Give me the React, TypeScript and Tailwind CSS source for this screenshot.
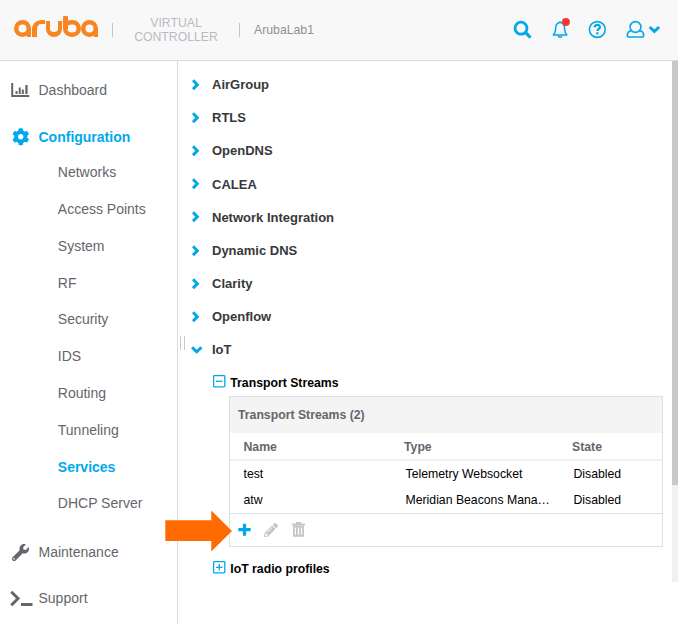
import type { ReactNode } from "react";
import { FaCog, FaPencilAlt, FaWrench } from "react-icons/fa";

const subItems = ["Networks", "Access Points", "System", "RF", "Security", "IDS", "Routing", "Tunneling", "Services", "DHCP Server"];
const sections = ["AirGroup", "RTLS", "OpenDNS", "CALEA", "Network Integration", "Dynamic DNS", "Clarity", "Openflow"];
const streams = [
  { name: "test", type: "Telemetry Websocket", state: "Disabled" },
  { name: "atw", type: "Meridian Beacons Mana…", state: "Disabled" },
];

function Logo() {
  return (
    <div role="img" aria-label="aruba" className="flex h-[21px] w-[85px] items-end text-[#f68522]">
      <div className="relative h-[17px] w-[17px] rounded-full shadow-[inset_0_0_0_4.5px_#f68522]">
        <i className="absolute right-0 bottom-0 h-[9px] w-[4.5px] bg-current" />
      </div>
      <div className="ml-px h-[17px] w-[13px] rounded-tl-[9px] border-t-4 border-l-[5px] border-current" />
      <div className="ml-px h-[16px] w-[16px] rounded-b-full border-x-4 border-b-[5px] border-current" />
      <div className="relative ml-px h-[17px] w-[17.5px] rounded-full shadow-[inset_0_0_0_4.5px_#f68522]">
        <i className="absolute -top-1 left-0 h-[13px] w-[4.5px] rounded-t-[1px] bg-current" />
      </div>
      <div className="relative h-[17px] w-[17.5px] rounded-full shadow-[inset_0_0_0_4.5px_#f68522]">
        <i className="absolute right-0 bottom-0 h-[9px] w-[4.5px] bg-current" />
      </div>
    </div>
  );
}

function Chevron({ down = false }: { down?: boolean }) {
  return down ? (
    <svg className="mt-px" width="12" height="8" viewBox="0 0 12 8" fill="none" stroke="#01a9ec" strokeWidth="3">
      <path d="M1 1.4 5.7 5.8 10.4 1.4" />
    </svg>
  ) : (
    <svg className="ml-px" width="8" height="12" viewBox="0 0 8 12" fill="none" stroke="#01a9ec" strokeWidth="3">
      <path d="M1 1.2 5.3 5.7 1 10.2" />
    </svg>
  );
}

function Toggle({ open }: { open: boolean }) {
  return (
    <svg width="13" height="13" viewBox="0 0 13 13" fill="none" stroke="#01a9ec">
      <rect x="0.6" y="0.6" width="11.2" height="11.2" rx="0.8" strokeWidth="1.3" />
      <path d={open ? "M3 6.3h6.5" : "M3 6.3h6.5M6.2 3v6.5"} strokeWidth="1.3" />
    </svg>
  );
}

function NavRow({ icon, label, active = false }: { icon: ReactNode; label: string; active?: boolean }) {
  return (
    <div className={active ? "flex h-8 items-center font-bold text-[#01a9ec]" : "flex h-8 items-center"}>
      <span className="flex w-[38.5px] shrink-0 pl-[10px]">{icon}</span>
      <span>{label}</span>
    </div>
  );
}

export default function App() {
  return (
    <div className="relative flex h-[624px] w-[678px] flex-col overflow-hidden bg-white font-['Liberation_Sans',Arial,sans-serif]">
      <header className="flex h-[61px] shrink-0 border-b border-[#dcdcde] bg-[#f8f8f8]">
        <div className="pt-4 pl-[14px]"><Logo /></div>
        <div className="mt-[23px] ml-[13px] h-[14px] w-px bg-[#c5c6ca]" />
        <div className="mt-4 ml-[20.5px] w-[85px] text-center text-[12.25px] leading-[14px] text-[#b9bbc3]">
          <div>VIRTUAL</div><div>CONTROLLER</div>
        </div>
        <div className="mt-[23px] ml-[20.5px] h-[14px] w-px bg-[#c5c6ca]" />
        <div className="mt-[22px] ml-[14px] text-[12.25px] leading-4 text-[#909093]">ArubaLab1</div>
        <div className="ml-auto flex pt-[17px] pr-[17px]">
          <svg width="20" height="25" viewBox="0 0 20 25" fill="none" stroke="#01a9ec">
            <circle cx="8" cy="11.2" r="6" strokeWidth="2.8" />
            <path d="m12.7 15.7 3.9 3.9" strokeWidth="3.2" strokeLinecap="round" />
          </svg>
          <svg className="ml-[19px]" width="20" height="25" viewBox="0 0 20 25" fill="none" stroke="#01a9ec" strokeWidth="1.5">
            <path d="M7.7 4.2v1.4C4.7 6.3 3.7 8.4 3.7 11c0 4-.8 5.4-2.4 7h13.6c-1.6-1.6-2.4-3-2.4-7 0-2.6-1-4.7-4.1-5.4V4.2" strokeLinejoin="round" />
            <path d="M6.2 18.6c.2 2.2 3.6 2.2 3.8 0" />
            <circle cx="13.9" cy="5" r="4" fill="#fa3434" stroke="none" />
          </svg>
          <svg className="ml-[16px]" width="19" height="25" viewBox="0 0 19 25" fill="none" stroke="#01a9ec">
            <circle cx="9.3" cy="12.5" r="7.9" strokeWidth="1.6" />
            <path d="M6.6 10.3c.3-3.4 5.4-3.2 5.3-.2-.1 2-2.5 2-2.5 3.9" strokeWidth="2.2" />
            <path d="M8.2 15.2h2.3v2.2H8.2z" fill="#01a9ec" stroke="none" />
          </svg>
          <svg className="ml-[19px]" width="35" height="25" viewBox="0 0 35 25" fill="none" stroke="#01a9ec">
            <circle cx="9.5" cy="10" r="5.4" strokeWidth="1.6" />
            <path d="M5.2 13.6C2.7 14.2 1.3 16 1.3 18.2c0 1.2.8 1.8 2 1.8h12.4c1.2 0 2-.6 2-1.8 0-2.2-1.4-4-3.9-4.6" strokeWidth="1.6" />
            <path d="m23.7 10 4.7 4.4 4.7-4.4" strokeWidth="3" />
          </svg>
        </div>
      </header>

      <div className="flex min-h-0 flex-1">
        <nav className="w-[178px] shrink-0 border-r border-[#dcdcde] pt-[13px] text-[14px] text-[#65666b]">
          <NavRow label="Dashboard" icon={
            <svg width="20" height="16" viewBox="0 0 20 16" fill="currentColor">
              <path d="M1.2 1h2v12h16v2h-18zM5.5 9h2v3h-2zM8.7 5.5h2V12h-2zM11.8 7.5h2V12h-2zM15.3 3h2.3v9h-2.3z" />
            </svg>
          } />
          <div className="h-[15px]" />
          <NavRow active label="Configuration" icon={<FaCog className="ml-[1.5px]" size={17.5} />} />
          <ul className="pt-[1.5px] pl-[57.8px]">
            {subItems.map((item) => (
              <li key={item} className={item === "Services" ? "flex h-[36.77px] items-center font-bold text-[#01a9ec]" : "flex h-[36.77px] items-center"}>{item}</li>
            ))}
          </ul>
          <div className="h-[14.8px]" />
          <NavRow label="Maintenance" icon={<FaWrench className="ml-[1.5px]" size={17} />} />
          <div className="h-[14px]" />
          <NavRow label="Support" icon={
            <svg className="shrink-0" width="24" height="17" viewBox="0 0 24 17" fill="none" stroke="currentColor" strokeWidth="3">
              <path d="M1.3 1.8 8 8.5l-6.7 6.7M11 14.5h11.5" />
            </svg>
          } />
        </nav>

        <div className="flex w-2 shrink-0 items-start gap-[3px] pt-[275px] pl-[2px]">
          <i className="h-[14px] w-px bg-[#c9cad0]" /><i className="h-[14px] w-px bg-[#c9cad0]" />
        </div>

        <main className="min-w-0 flex-1 pt-[7.4px]">
          {sections.map((section) => (
            <div key={section} className="flex h-[33.14px] items-center pl-[5px] text-[13px] font-bold text-[#38383a]">
              <span className="w-[21px]"><Chevron /></span>{section}
            </div>
          ))}
          <div className="flex h-[33.1px] items-center pl-[5px] text-[13px] font-bold text-[#38383a]">
            <span className="w-[21px]"><Chevron down /></span>IoT
          </div>
          <div className="flex h-[29.3px] items-center gap-1 pt-[4px] pl-[27px] text-[12.25px] font-bold text-black">
            <span className="-mt-[2.5px]"><Toggle open /></span><span className="pt-px pl-[0.3px]">Transport Streams</span>
          </div>
          <section className="ml-[43px] h-[151px] w-[434px] border border-[#e0e0e2] text-[12.25px]">
            <h2 className="flex h-9 items-center bg-[#f4f4f4] pl-2 font-bold text-[#65666b]">Transport Streams (2)</h2>
            <div className="grid h-7 grid-cols-[160.5px_168px_1fr] items-center border-b-2 border-[#f0f0f0] pt-[2.5px] pl-[13.5px] font-bold text-[#65666b]">
              <span>Name</span><span>Type</span><span>State</span>
            </div>
            {streams.map((row) => (
              <div key={row.name} className="grid h-[26px] grid-cols-[162px_168px_1fr] items-center pl-[13.5px] text-black">
                <span>{row.name}</span><span>{row.type}</span><span>{row.state}</span>
              </div>
            ))}
            <div className="flex h-[33px] items-center border-t border-[#e0e0e2] pl-[8px]">
              <svg width="13" height="13" viewBox="0 0 13 13" stroke="#01a9ec" strokeWidth="3.2"><path d="M0.3 6.7h12.4M6.5.7v12" /></svg>
              <FaPencilAlt className="ml-[13px] text-[#c5c6c9]" size={14} />
              <svg className="ml-[14px]" width="13" height="15" viewBox="0 0 13 15" fill="none" stroke="#c5c6c9">
                <path d="M0 2.5h13M4 1h5" strokeWidth="1.8" />
                <path d="M1.9 4.5v9.2h9.2V4.5zM4.9 5v8M8.1 5v8" strokeWidth="1.9" />
              </svg>
            </div>
          </section>
          <div className="mt-[7px] flex h-[30px] items-center gap-1 pl-[27px] text-[12.25px] font-bold text-black">
            <span className="-mt-[2px]"><Toggle open={false} /></span><span className="pl-[0.3px]">IoT radio profiles</span>
          </div>
        </main>

        <div className="h-[521px] w-[6px] shrink-0 bg-[#f1f1f1]"><div className="h-[424px] bg-[#c8c8c8]" /></div>
      </div>
      <svg className="absolute top-[510px] left-[165px]" width="68" height="42" viewBox="0 0 68 42" fill="#ff6b00">
        <path d="M.3 10.3h46V.5L67 21 46.3 41.5V31H.3z" />
      </svg>
    </div>
  );
}
